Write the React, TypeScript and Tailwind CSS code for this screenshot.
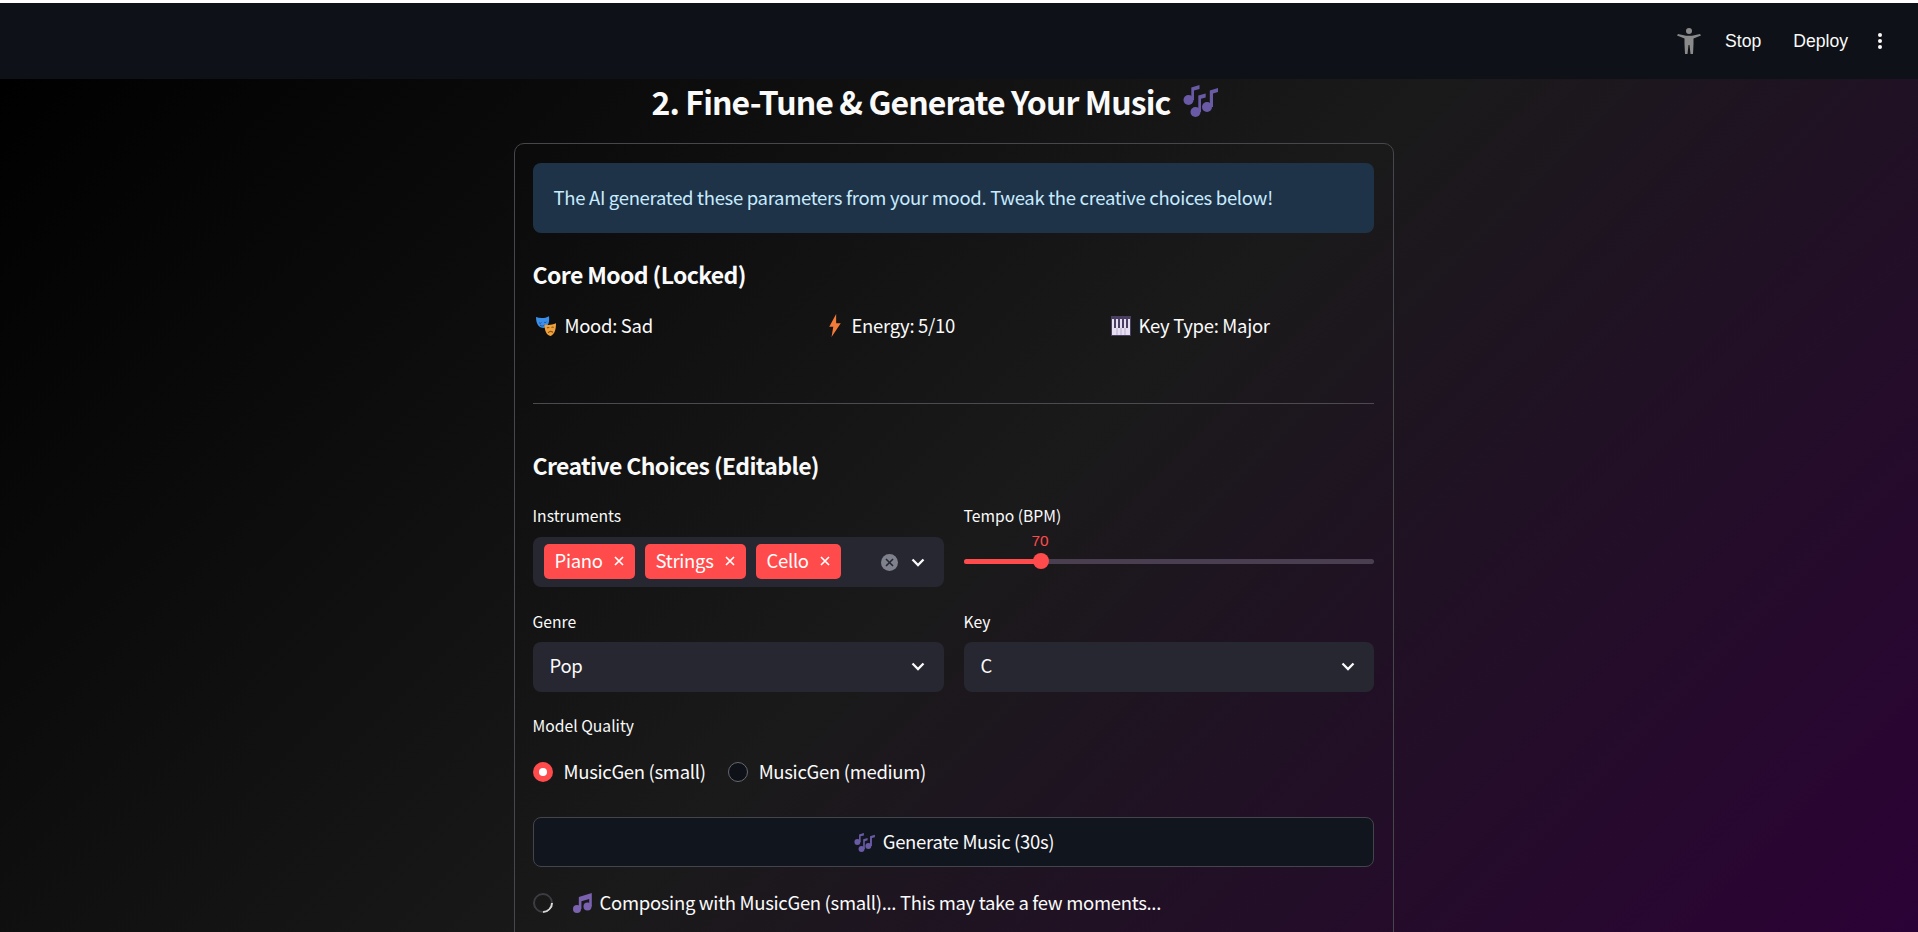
import React from 'react';

const sans = 'font-["Noto_Sans_CJK_SC","Noto_Sans",sans-serif]';
const body = 'text-[18.5px] tracking-[-0.31px]';
const label = 'text-[15.7px] text-[#fafafa]';
const sub = 'text-[23px] tracking-[-0.62px] font-semibold text-[#fafafa]';

function Notes({ className }: { className: string }) {
    return (
        <svg viewBox="0 0 35 32" className={className} fill="#6a5aa6">
            <circle cx="5.5" cy="15" r="5" />
            <path d="M8.300 15V2.600L16.500 0v4L11 5.600V15z" />
            <circle cx="12.500" cy="27" r="5" />
            <path d="M15.300 27V10.600l7.400-2.200v4L18 13.800V27z" />
            <circle cx="24" cy="22" r="5" />
            <path d="M26.800 22V5.600L35 3v4l-5 1.600V22z" />
        </svg>
    );
}

function Note({ className }: { className: string }) {
    return (
        <svg viewBox="0 0 19 20" className={className} fill="#7a62b0">
            <circle cx="4" cy="16" r="4" />
            <circle cx="14.500" cy="13.500" r="4" />
            <path d="M5.800 16V4L18.800 0v13.500h-2.600V6L8.400 8.200V16z" />
        </svg>
    );
}

function Masks() {
    return (
        <svg viewBox="0 0 20 20" className="w-5 h-5 shrink-0">
            <path d="M0 1c4 1.500 9 1.500 13-.8.700 5.500-.5 10.300-5 11.800C2.500 12 0 7.500 0 1z" fill="#3c8fe8" />
            <path d="M3 6.500c.8 1 2 1 2.500.2M8 6c.8.800 2 .6 2.500-.300M4 9c1.500 1.500 3.500 1.300 5-.3" stroke="#1c4f9c" strokeWidth="1" fill="none" />
            <path d="M8.500 8.500c3.500.800 7.500.5 11.500-1.200 0 5.700-1 11-5.500 12.700-4-.500-6-5.500-6-11.500z" fill="#f0a23c" />
            <path d="M11 12c.7-.7 1.700-.7 2.300 0M15.500 11.500c.7-.6 1.700-.6 2.200 0M12 16.800c1.500-1.500 3.500-1.700 5-.3" stroke="#8f5316" strokeWidth="1.100" fill="none" />
        </svg>
    );
}

function Bolt() {
    return (
        <svg viewBox="0 0 12 20" className="w-[14px] h-[23px] shrink-0">
            <path d="M7 0 1 11h3.500L3 20l8-12H7z" fill="#f27b3a" />
        </svg>
    );
}

function Piano() {
    return (
        <svg viewBox="0 0 20 20" className="w-5 h-5 shrink-0">
            <rect x="0" y="0" width="20" height="20" fill="#4a3f63" />
            <rect x="1" y="3" width="18" height="16" fill="#e6dff0" />
            <path d="M3 3h2v9H3zM7 3h2v9H7zM11 3h2v9h-2zM15 3h2v9h-2z" fill="#4a3f63" />
            <path d="M6 12v7M10 12v7M14 12v7" stroke="#a89bbd" strokeWidth=".7" />
        </svg>
    );
}

function Chevron() {
    return (
        <svg viewBox="0 0 14 9" className="w-[14px] h-[9px] shrink-0" fill="none" stroke="#fafafa" strokeWidth="2.300">
            <path d="M1.500 1.500 7 7l5.500-5.500" />
        </svg>
    );
}

function Chip({ label, width }: { label: string; width: string }) {
    return (
        <span className={`flex items-center justify-between h-[35px] px-[11px] rounded-[5px] bg-[#ff4b4b] text-white ${body} ${width}`}>
            {label}
            <svg viewBox="0 0 10 10" className="w-[10px] h-[10px]" stroke="#fff" strokeWidth="1.700">
                <path d="M1 1l8 8M9 1l-8 8" />
            </svg>
        </span>
    );
}

function Select({ value }: { value: string }) {
    return (
        <div className={`flex items-center justify-between h-[50px] pl-[17px] pr-[19px] pb-[2px] rounded-lg bg-[#262730] text-[#fafafa] ${body}`}>
            {value}
            <Chevron />
        </div>
    );
}

function Radio({ on, label }: { on?: boolean; label: string }) {
    return (
        <div className={`flex items-center gap-[11px] text-[#fafafa] ${body}`}>
            {on ? (
                <span className="flex items-center justify-center w-5 h-5 rounded-full bg-[#ff4b4b]">
                    <span className="w-2 h-2 rounded-full bg-white" />
                </span>
            ) : (
                <span className="w-5 h-5 rounded-full bg-[#0e1117] border border-[#666870]" />
            )}
            {label}
        </div>
    );
}

export default function App() {
    return (
        <div className={`h-[932px] overflow-hidden flex flex-col bg-white pt-[3px] ${sans}`}>
            <header className="flex items-center justify-end h-[76px] shrink-0 bg-[#0e1117] text-[#fafafa] font-['Liberation_Sans',sans-serif] text-[17.6px]">
                <svg viewBox="0 0 24 28" className="w-6 h-7 mr-[24px]" fill="#8a8a8a">
                    <circle cx="12" cy="4" r="3" />
                    <path d="M0 8.500 1 7l8 1.800h6L23 7l1 1.500-7.500 3V17l-.5 10h-2.500l-1-9h-1l-1 9H8l-.5-10v-5.500z" />
                </svg>
                <span>Stop</span>
                <span className="ml-[32px]">Deploy</span>
                <svg viewBox="0 0 6 18" className="w-[6px] h-[18px] ml-[29px] mr-[35px]" fill="#fafafa">
                    <circle cx="3" cy="3" r="2" />
                    <circle cx="3" cy="9" r="2" />
                    <circle cx="3" cy="15" r="2" />
                </svg>
            </header>

            <main className="flex-1 flex flex-col items-center bg-[linear-gradient(135deg,#000000_0%,#1a1a1a_50%,#2d0038_100%)]">
                <h2 className="flex items-center gap-[13px] h-[48px] mt-[-2px] ml-[-48px] text-[32px] tracking-[-0.9px] font-semibold text-[#fafafa]">
                    2. Fine-Tune &amp; Generate Your Music
                    <Notes className="w-[35px] h-[32px]" />
                </h2>

                <section className="w-[880px] ml-[-11px] mt-[18px] pl-[18px] pr-[19px] pt-[19px] border border-[#46464c] rounded-[10px] h-[900px] shrink-0">
                    <div className={`flex items-center h-[70px] px-[21px] pb-[1px] rounded-lg bg-[#1f3348] text-[#c7ebff] ${body}`}>
                        The AI generated these parameters from your mood. Tweak the creative choices below!
                    </div>

                    <h3 className={`mt-[25px] h-[32px] flex items-center ${sub}`}>Core Mood (Locked)</h3>

                    <div className={`grid grid-cols-3 gap-[20px] mt-[22px] h-[24px] text-[#fafafa] ${body}`}>
                        <div className="flex items-center gap-[9px] pl-[3px]"><Masks />Mood: Sad</div>
                        <div className="flex items-center gap-[10px] pl-[8px]"><Bolt />Energy: 5/10</div>
                        <div className="flex items-center gap-[8px] pl-[4px]"><Piano />Key Type: Major</div>
                    </div>

                    <hr className="mt-[67px] border-0 border-t border-[#4a4a50]" />

                    <h3 className={`mt-[45px] h-[32px] flex items-center ${sub}`}>Creative Choices (Editable)</h3>

                    <div className="grid grid-cols-[411px_410px] gap-x-[20px] mt-[25px]">
                        <div>
                            <div className={`h-[20px] mb-[11px] flex items-center ${label}`}>Instruments</div>
                            <div className="flex items-center h-[50px] pl-[11px] pr-[19px] rounded-lg bg-[#262730]">
                                <div className="flex gap-[10px] mb-[2px]">
                                    <Chip label="Piano" width="w-[91px]" />
                                    <Chip label="Strings" width="w-[101px]" />
                                    <Chip label="Cello" width="w-[85px]" />
                                </div>
                                <span className="flex items-center justify-center w-[17px] h-[17px] ml-auto mr-[13px] rounded-full bg-[#7f818c]">
                                    <svg viewBox="0 0 9 9" className="w-[9px] h-[9px]" stroke="#262730" strokeWidth="1.600">
                                        <path d="M1 1l7 7M8 1 1 8" />
                                    </svg>
                                </span>
                                <Chevron />
                            </div>
                        </div>
                        <div>
                            <div className={`h-[20px] flex items-center ${label}`}>Tempo (BPM)</div>
                            <div className="relative h-[61px]">
                                <span className="absolute left-[68px] top-[3px] font-['Liberation_Sans',sans-serif] text-[15.4px] text-[#ff4b4b]">70</span>
                                <div className="absolute left-0 right-0 top-[33px] flex h-[5px] rounded-full overflow-hidden bg-[#4a3f50]">
                                    <div className="w-[77px] bg-[#ff4b4b]" />
                                </div>
                                <span className="absolute left-[69px] top-[27px] w-4 h-4 rounded-full bg-[#ff4b4b]" />
                            </div>
                        </div>
                        <div className="mt-[25px]">
                            <div className={`h-[20px] mb-[10px] flex items-center ${label}`}>Genre</div>
                            <Select value="Pop" />
                        </div>
                        <div className="mt-[25px]">
                            <div className={`h-[20px] mb-[10px] flex items-center ${label}`}>Key</div>
                            <Select value="C" />
                        </div>
                    </div>

                    <div className={`h-[20px] mt-[24px] flex items-center ${label}`}>Model Quality</div>
                    <div className="flex items-center gap-[22px] mt-[26px] h-[20px]">
                        <Radio on label="MusicGen (small)" />
                        <Radio label="MusicGen (medium)" />
                    </div>

                    <button className={`flex items-center justify-center gap-[8px] w-full h-[50px] mt-[35px] rounded-lg bg-[#11151e] border border-[#44454c] text-[#fafafa] ${body}`}>
                        <Notes className="w-[21px] h-[19px] ml-[2px]" />
                        Generate Music (30s)
                    </button>

                    <div className={`flex items-center mt-[23px] h-[26px] text-[#fafafa] ${body}`}>
                        <span className="w-5 h-5 rounded-full border-2 border-[#3c3c42] border-b-[#d8d8d8] -rotate-45" />
                        <Note className="w-[19px] h-[20px] ml-[20px] mr-[8px]" />
                        Composing with MusicGen (small)... This may take a few moments...
                    </div>
                </section>
            </main>
        </div>
    );
}
